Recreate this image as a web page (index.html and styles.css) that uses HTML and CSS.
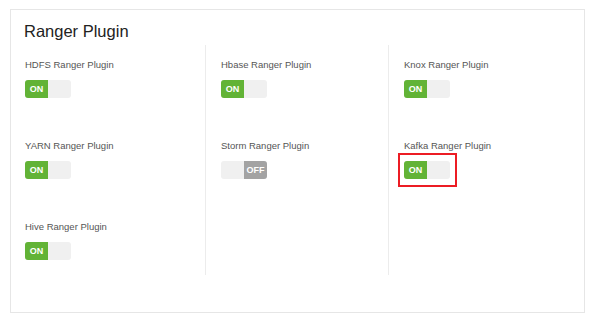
FILE: index.html
```html
<!DOCTYPE html>
<html>

<head>
    <title>Ranger Plugin</title>
    <meta http-equiv="Content-Type" content="text/html;charset=UTF-8">
    <link rel="stylesheet" href="styles.css">
</head>

<body>
    <div class="panel">
        <h2 class="panel-title">Ranger Plugin</h2>
        <div class="plugins">
            <div class="column">
                <div class="plugin">
                    <label>HDFS Ranger Plugin</label>
                    <div class="switch"><span class="switch-on">ON</span><span class="switch-off"></span></div>
                </div>
                <div class="plugin">
                    <label>YARN Ranger Plugin</label>
                    <div class="switch"><span class="switch-on">ON</span><span class="switch-off"></span></div>
                </div>
                <div class="plugin">
                    <label>Hive Ranger Plugin</label>
                    <div class="switch"><span class="switch-on">ON</span><span class="switch-off"></span></div>
                </div>
            </div>
            <div class="column">
                <div class="plugin">
                    <label>Hbase Ranger Plugin</label>
                    <div class="switch"><span class="switch-on">ON</span><span class="switch-off"></span></div>
                </div>
                <div class="plugin">
                    <label>Storm Ranger Plugin</label>
                    <div class="switch"><span class="switch-off"></span><span class="switch-knob">OFF</span></div>
                </div>
            </div>
            <div class="column column--last">
                <div class="plugin">
                    <label>Knox Ranger Plugin</label>
                    <div class="switch"><span class="switch-on">ON</span><span class="switch-off"></span></div>
                </div>
                <div class="plugin">
                    <label>Kafka Ranger Plugin</label>
                    <div class="highlight">
                        <div class="switch"><span class="switch-on">ON</span><span class="switch-off"></span></div>
                    </div>
                </div>
            </div>
        </div>
    </div>
</body>

</html>
```

FILE: styles.css
```css
* {
    box-sizing: border-box;
}

body {
    font-family: "Liberation Sans", Arial, sans-serif;
    margin: 9px 15px 0 10px;
    background-color: #fff;
}

.panel {
    border: 1px solid #e6e6e6;
    padding: 11px 13px 37px;
    height: 304px;
}

.panel-title {
    font-size: 16.5px;
    font-weight: normal;
    line-height: 20px;
    color: #222;
    margin: 0 0 4px;
}

.plugins {
    display: grid;
    grid-template-columns: 182px 183px 1fr;
}

.column {
    padding: 13px 0 15px 15px;
    border-right: 1px solid #ececec;
}

.column:first-child {
    padding-left: 1px;
}

.column--last {
    border-right: none;
}

.plugin {
    display: flex;
    flex-direction: column;
    align-items: flex-start;
    gap: 8px;
    margin-bottom: 41px;
}

.plugin:last-child {
    margin-bottom: 0;
}

label {
    font-size: 9.5px;
    line-height: 14px;
    color: #555;
}

.switch {
    display: flex;
    width: 46px;
    height: 18px;
    border-radius: 3px;
    overflow: hidden;
    background-color: #f0f0f0;
}

.switch span {
    width: 23px;
    height: 18px;
    font-size: 9px;
    font-weight: bold;
    line-height: 18px;
    color: #fff;
    text-align: center;
}

.switch-on {
    background-color: #62b336;
}

.switch-knob {
    background-color: #a3a3a3;
}

.highlight {
    border: 2px solid #ec1c24;
    padding: 6px 5px 6px 4px;
    margin: -8px -7px -8px -6px;
}
```
